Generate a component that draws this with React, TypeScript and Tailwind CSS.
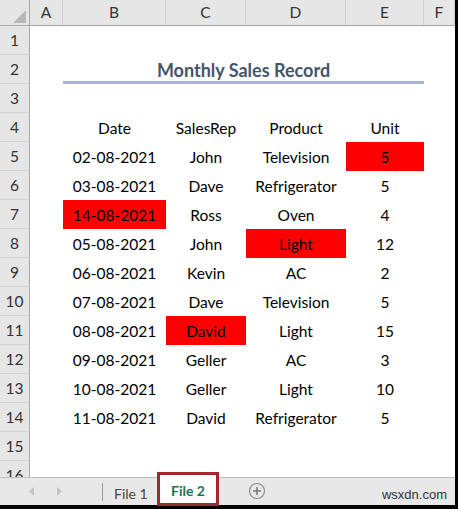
import React from "react";

const GRID = "grid grid-cols-[30px_33px_103px_80px_100px_78px_31px]";

type Row = { d: string; s: string; p: string; u: string; red?: "B" | "C" | "D" | "E" };

const data: Row[] = [
  { d: "02-08-2021", s: "John", p: "Television", u: "5", red: "E" },
  { d: "03-08-2021", s: "Dave", p: "Refrigerator", u: "5" },
  { d: "14-08-2021", s: "Ross", p: "Oven", u: "4", red: "B" },
  { d: "05-08-2021", s: "John", p: "Light", u: "12", red: "D" },
  { d: "06-08-2021", s: "Kevin", p: "AC", u: "2" },
  { d: "07-08-2021", s: "Dave", p: "Television", u: "5" },
  { d: "08-08-2021", s: "David", p: "Light", u: "15", red: "C" },
  { d: "09-08-2021", s: "Geller", p: "AC", u: "3" },
  { d: "10-08-2021", s: "Geller", p: "Light", u: "10" },
  { d: "11-08-2021", s: "David", p: "Refrigerator", u: "5" },
];

function RowHead({ n }: { n: number }) {
  return (
    <div className="flex items-center justify-center bg-[#e6e6e6] border-b border-r border-b-[#d2d2d2] border-r-[#a8a8a8] text-[15.5px] text-[#333] pt-[1px]">
      {n}
    </div>
  );
}

function Cell({ children, red }: { children?: React.ReactNode; red?: boolean }) {
  return (
    <div
      className={
        "flex items-center justify-center text-[15.5px] text-black pt-[2px] " +
        (red ? "bg-[#ff0000]" : "bg-white")
      }
    >
      {children}
    </div>
  );
}

function EmptyRow({ n }: { n: number }) {
  return (
    <div className={GRID + " h-[29px]"}>
      <RowHead n={n} />
      <Cell />
      <Cell />
      <Cell />
      <Cell />
      <Cell />
      <Cell />
    </div>
  );
}

export default function App() {
  return (
    <div
      className="w-[458px] h-[509px] bg-black flex flex-col overflow-hidden"
      style={{ fontFamily: "Lato, 'Open Sans', sans-serif" }}
    >
      <div className="flex h-[505px]">
        <div className="w-[455px] flex flex-col">
          {/* sheet */}
          <div className="h-[477px] overflow-hidden bg-white">
            {/* column headers */}
            <div className={GRID + " h-[26px] bg-[#e6e6e6] border-b border-[#a8a8a8] text-[15.5px] text-[#333]"}>
              <div className="relative border-r border-[#a8a8a8]">
                <svg className="absolute left-[13px] top-[10px]" width="13" height="13" viewBox="0 0 13 13">
                  <polygon points="13,0 13,13 0,13" fill="#b7b7b7" />
                </svg>
              </div>
              {["A", "B", "C", "D", "E", "F"].map((c) => (
                <div key={c} className="flex items-center justify-center border-r border-[#cfcfcf] pt-[1px]">
                  {c}
                </div>
              ))}
            </div>
            <EmptyRow n={1} />
            {/* row 2 title */}
            <div className={GRID + " h-[29px]"}>
              <RowHead n={2} />
              <Cell />
              <div className="col-span-4 flex flex-col h-[29px] overflow-hidden">
                <div className="flex-1 min-h-0 flex items-center justify-center text-[18px] leading-none font-bold text-[#44546a] pt-[3px]">
                  Monthly Sales Record
                </div>
                <div className="h-[3px] shrink-0 bg-[#a6b6d6]" />
              </div>
              <Cell />
            </div>
            <EmptyRow n={3} />
            {/* row 4 headers */}
            <div className={GRID + " h-[29px]"}>
              <RowHead n={4} />
              <Cell />
              <Cell>Date</Cell>
              <Cell>SalesRep</Cell>
              <Cell>Product</Cell>
              <Cell>Unit</Cell>
              <Cell />
            </div>
            {data.map((r, i) => (
              <div key={i} className={GRID + " h-[29px]"}>
                <RowHead n={i + 5} />
                <Cell />
                <Cell red={r.red === "B"}>{r.d}</Cell>
                <Cell red={r.red === "C"}>{r.s}</Cell>
                <Cell red={r.red === "D"}>{r.p}</Cell>
                <Cell red={r.red === "E"}>{r.u}</Cell>
                <Cell />
              </div>
            ))}
            <EmptyRow n={15} />
            <EmptyRow n={16} />
          </div>
          {/* tab bar */}
          <div className="relative h-[28px] bg-[#e8e8e8] border-t border-[#bdbdbd] flex items-center">
            <svg className="absolute left-[29px] top-[9px]" width="5" height="9" viewBox="0 0 5 9">
              <polygon points="5,0 5,9 0,4.5" fill="#c4c4c4" />
            </svg>
            <svg className="absolute left-[57px] top-[9px]" width="5" height="9" viewBox="0 0 5 9">
              <polygon points="0,0 0,9 5,4.5" fill="#c4c4c4" />
            </svg>
            <div className="absolute left-[102px] top-[5px] h-[18px] w-px bg-[#9a9a9a]" />
            <div className="absolute left-[114px] top-[5px] text-[14px] text-[#444]">File 1</div>
            <div className="absolute left-[157px] top-[-6px] w-[62px] h-[34px] bg-white border-[3px] border-[#9d2a33] flex items-center justify-center pt-[3px] text-[14px] font-bold text-[#217346]">
              File 2
            </div>
            <svg className="absolute left-[248px] top-[4px]" width="18" height="18" viewBox="0 0 18 18">
              <circle cx="9" cy="9" r="7.5" fill="none" stroke="#8a8a8a" strokeWidth="1.2" />
              <line x1="5" y1="9" x2="13" y2="9" stroke="#6e6e6e" strokeWidth="1.4" />
              <line x1="9" y1="5" x2="9" y2="13" stroke="#6e6e6e" strokeWidth="1.4" />
            </svg>
            <div
              className="absolute right-[8px] top-[7px] text-[13px] text-[#333]"
              style={{ fontFamily: "'Liberation Sans', Arial, sans-serif" }}
            >
              wsxdn.com
            </div>
          </div>
        </div>
        <div className="w-[3px] bg-black" />
      </div>
      <div className="h-[4px] bg-black" />
    </div>
  );
}
